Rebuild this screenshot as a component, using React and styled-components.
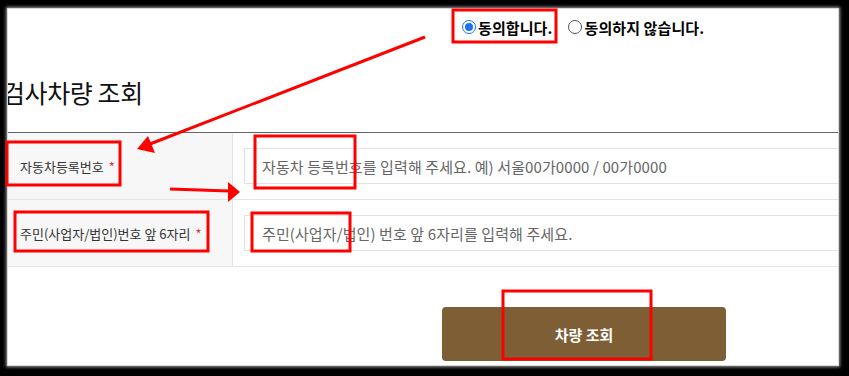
import React from 'react'
import styled, { createGlobalStyle } from 'styled-components'

const Global = createGlobalStyle`
  html, body {
    margin: 0;
    padding: 0;
    background: #000;
  }
  body {
    width: 849px;
    height: 376px;
    overflow: hidden;
    font-family: "Noto Sans CJK KR", "Noto Sans", sans-serif;
  }
`

const Stage = styled.div`
  position: relative;
  width: 849px;
  height: 376px;
  padding: 9px 11px 11px 8px;
  box-sizing: border-box;
`

const Paper = styled.div`
  width: 830px;
  height: 356px;
  background: #fff;
  overflow: hidden;
  box-shadow: 0 0 0 1px #d8d8d8, 0 0 3px 2px #9a9a9a;
  display: flex;
  flex-direction: column;
`

const RadioRow = styled.div`
  display: flex;
  align-items: center;
  gap: 16px;
  height: 20px;
  margin-top: 8px;
  padding-left: 454px;
`

const RadioLabel = styled.label`
  display: flex;
  align-items: center;
  gap: 2px;
  font-size: 15px;
  font-weight: 700;
  color: #000;
  letter-spacing: 0.1px;
`

const RadioDot = styled.span`
  width: 12px;
  height: 12px;
  border-radius: 50%;
  border: 1px solid ${p => (p.$on ? '#1a73e8' : '#555')};
  display: flex;
  align-items: center;
  justify-content: center;
  &::after {
    content: '';
    width: 8px;
    height: 8px;
    border-radius: 50%;
    background: ${p => (p.$on ? '#1a73e8' : 'transparent')};
  }
`

const Title = styled.h2`
  margin: 39px 0 0 -6px;
  font-size: 25px;
  line-height: 32px;
  font-weight: 400;
  color: #111;
  letter-spacing: -0.4px;
`

const Table = styled.div`
  margin-top: 24px;
  width: 900px;
  border-top: 1px solid #666;
`

const Row = styled.div`
  display: grid;
  grid-template-columns: 225px 1fr;
  height: 66px;
  border-bottom: 1px solid #e4e4e4;
`

const Head = styled.div`
  background: #f7f7f7;
  border-right: 1px solid #e4e4e4;
  display: flex;
  align-items: center;
  padding-left: 12px;
  font-size: 13px;
  color: #333;
`

const Star = styled.span`
  color: #e0353a;
  margin-left: 5px;
`

const Cell = styled.div`
  display: flex;
  align-items: center;
  padding-left: 11px;
`

const Input = styled.input`
  width: 640px;
  height: 36px;
  box-sizing: border-box;
  border: 1px solid #e2e2e2;
  padding: 0 17px;
  font-family: inherit;
  font-size: 15px;
  letter-spacing: 0.1px;
  color: #333;
  outline: none;
  &::placeholder {
    color: #666;
  }
`

const Actions = styled.div`
  margin-top: 40px;
  padding-left: 434px;
`

const Button = styled.button`
  width: 284px;
  height: 54px;
  border: 0;
  border-radius: 4px;
  background: #7d5e35;
  color: #fff;
  font-family: inherit;
  font-size: 15px;
  font-weight: 700;
`

const Marks = styled.svg`
  position: absolute;
  left: 0;
  top: 0;
  pointer-events: none;
`

const boxes = [
  [453, 10, 556, 42],
  [7, 142, 120, 185],
  [255, 136, 355, 188],
  [15, 212, 208, 251],
  [252, 213, 350, 251],
  [503, 291, 651, 359],
]

const Annotations = () => (
  <Marks width="849" height="376" viewBox="0 0 849 376">
    {boxes.map(([x1, y1, x2, y2], i) => (
      <rect key={i} x={x1} y={y1} width={x2 - x1} height={y2 - y1} fill="none" stroke="#ff0000" strokeWidth="3" />
    ))}
    <line x1="425" y1="37" x2="150" y2="144" stroke="#ff0000" strokeWidth="3" />
    <polygon points="137,149 148,136 155,153" fill="#ff0000" />
    <line x1="170" y1="189" x2="229" y2="191" stroke="#ff0000" strokeWidth="3" />
    <polygon points="240,192 228,182 228,202" fill="#ff0000" />
  </Marks>
)

export default function App() {
  return (
    <Stage>
      <Global />
      <Paper>
        <RadioRow>
          <RadioLabel><RadioDot $on />동의합니다.</RadioLabel>
          <RadioLabel><RadioDot />동의하지 않습니다.</RadioLabel>
        </RadioRow>
        <Title>검사차량 조회</Title>
        <Table>
          <Row>
            <Head>자동차등록번호<Star>*</Star></Head>
            <Cell><Input placeholder="자동차 등록번호를 입력해 주세요. 예) 서울00가0000 / 00가0000" /></Cell>
          </Row>
          <Row>
            <Head>주민(사업자/법인)번호 앞 6자리<Star>*</Star></Head>
            <Cell><Input placeholder="주민(사업자/법인) 번호 앞 6자리를 입력해 주세요." /></Cell>
          </Row>
        </Table>
        <Actions>
          <Button>차량 조회</Button>
        </Actions>
      </Paper>
      <Annotations />
    </Stage>
  )
}
